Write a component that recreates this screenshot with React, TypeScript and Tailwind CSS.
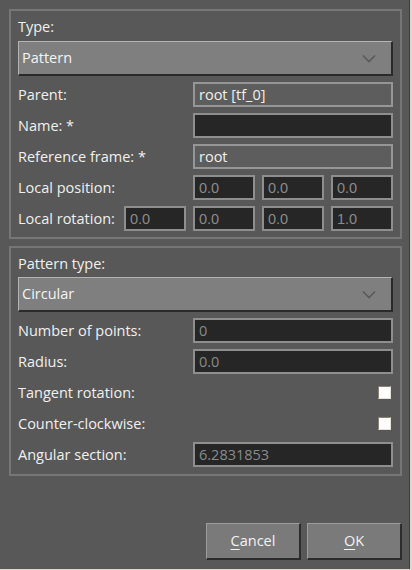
const font = { fontFamily: '"Open Sans", "Noto Sans", sans-serif' }

function Label({ children }: { children: React.ReactNode }) {
  return <span className="text-[14.5px] leading-[20px] text-[#f0f0f0] whitespace-nowrap">{children}</span>
}

/** Combo box with a raised look and a flat chevron at the right. */
function Combo({ value }: { value: string }) {
  return (
    <div className="flex h-[35px] items-center justify-between border-t border-l border-t-[#b4b4b4] border-l-[#b4b4b4] border-b-2 border-r-2 border-b-[#2a2a2a] border-r-[#2a2a2a] bg-[#7f7f7f] pl-[3px] pr-[15px]">
      <span className="text-[14.5px] leading-[20px] text-[#f4f4f4]">{value}</span>
      <svg width="14" height="9" viewBox="0 0 14 9" fill="none">
        <path d="M1 1.5 L7 7.5 L13 1.5" stroke="#5a5a5a" strokeWidth="1.6" />
      </svg>
    </div>
  )
}

function Field({ value, dark = true, w = 'w-[200px]', mono = false }: { value?: string; dark?: boolean; w?: string; mono?: boolean }) {
  return (
    <div
      className={`flex h-[25px] ${w} items-center border-2 px-[4px] text-[14.5px] leading-[20px] ${
        dark ? 'border-[#8e8e8e] bg-[#262626] text-[#8a8a8a]' : 'border-[#969696] bg-[#5d5d5d] text-[#f0f0f0]'
      }`}
      style={mono ? { fontFamily: '"Liberation Sans", Arial, sans-serif' } : undefined}
    >
      {value}
    </div>
  )
}

function Row({ label, children }: { label: string; children: React.ReactNode }) {
  return (
    <div className="flex h-[25px] items-center justify-between">
      <Label>{label}</Label>
      <div className="flex items-center gap-[7px]">{children}</div>
    </div>
  )
}

function Check() {
  return <div className="mr-[2px] h-[13px] w-[13px] border border-t-[#8a8274] border-l-[#8a8274] border-b-[#e4e0d8] border-r-[#e4e0d8] bg-white" />
}

function Button({ children }: { children: React.ReactNode }) {
  return (
    <button
      type="button"
      className="flex h-[37px] w-[95px] items-center justify-center border-t border-l border-t-[#9c9c9c] border-l-[#9c9c9c] border-b-2 border-r-2 border-b-[#2c2c2c] border-r-[#2c2c2c] bg-[#7a7a7a] text-[14.5px] text-[#f2f2f2]"
    >
      {children}
    </button>
  )
}

export default function App() {
  return (
    <div className="flex h-[570px] w-[412px] bg-[#dcd8d0] pr-[2px] pb-[1px]" style={font}>
      <div className="flex flex-1 flex-col border-r border-[#3e3e3e] bg-[#585858] pt-[9px] pl-[9px]">
        {/* Frame group */}
        <div className="flex w-[393px] flex-col border-2 border-[#767676] px-[7px] pt-[6px] pb-[6px]">
          <Label>Type:</Label>
          <div className="mt-[4px]">
            <Combo value="Pattern" />
          </div>
          <div className="mt-[6px] flex flex-col gap-[6px]">
            <Row label="Parent:">
              <Field value="root [tf_0]" dark={false} />
            </Row>
            <Row label="Name: *">
              <Field />
            </Row>
            <Row label="Reference frame: *">
              <Field value="root" dark={false} />
            </Row>
            <Row label="Local position:">
              <Field value="0.0" w="w-[62px]" mono />
              <Field value="0.0" w="w-[62px]" mono />
              <Field value="0.0" w="w-[62px]" mono />
            </Row>
            <Row label="Local rotation:">
              <Field value="0.0" w="w-[62px]" mono />
              <Field value="0.0" w="w-[62px]" mono />
              <Field value="0.0" w="w-[62px]" mono />
              <Field value="1.0" w="w-[62px]" mono />
            </Row>
          </div>
        </div>

        {/* Pattern group */}
        <div className="mt-[7px] flex w-[393px] flex-col border-2 border-[#767676] px-[7px] pt-[6px] pb-[7px]">
          <Label>Pattern type:</Label>
          <div className="mt-[3px]">
            <Combo value="Circular" />
          </div>
          <div className="mt-[6px] flex flex-col gap-[6px]">
            <Row label="Number of points:">
              <Field value="0" />
            </Row>
            <Row label="Radius:">
              <Field value="0.0" />
            </Row>
            <Row label="Tangent rotation:">
              <Check />
            </Row>
            <Row label="Counter-clockwise:">
              <Check />
            </Row>
            <Row label="Angular section:">
              <Field value="6.2831853" />
            </Row>
          </div>
        </div>

        <div className="mt-auto mb-[9px] mr-[7px] flex justify-end gap-[6px]">
          <Button>
            <span className="underline underline-offset-[3px]">C</span>ancel
          </Button>
          <Button>
            <span className="underline underline-offset-[3px]">O</span>K
          </Button>
        </div>
      </div>
    </div>
  )
}
